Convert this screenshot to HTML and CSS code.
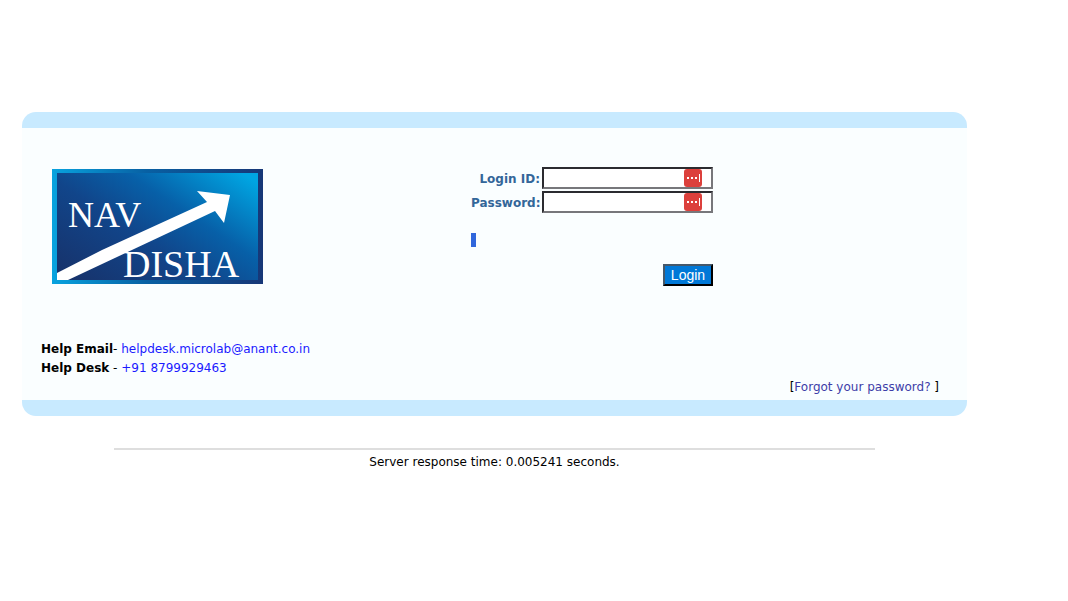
FILE: index.html
```
<!DOCTYPE html>
<html lang="en">
<head>
<meta charset="utf-8">
<meta name="viewport" content="width=device-width, initial-scale=1">
<title>Nav Disha Login</title>
<link rel="stylesheet" href="styles.css">
</head>
<body>
<div class="page">
  <main class="panel">
    <div class="intro">
      <svg class="logo" viewBox="0 0 211 115" role="img" aria-label="Nav Disha">
        <defs>
          <linearGradient id="face" x1="0" y1="0.9" x2="1" y2="0.1">
            <stop offset="0" stop-color="#17336c"/>
            <stop offset="0.4" stop-color="#11458a"/>
            <stop offset="0.65" stop-color="#0760a8"/>
            <stop offset="1" stop-color="#00a5e2"/>
          </linearGradient>
          <linearGradient id="frame" x1="0" y1="0" x2="1" y2="0">
            <stop offset="0" stop-color="#08a3df"/>
            <stop offset="0.45" stop-color="#0860a3"/>
            <stop offset="1" stop-color="#173777"/>
          </linearGradient>
        </defs>
        <rect width="211" height="115" fill="url(#frame)"/>
        <rect x="5" y="4" width="201" height="107" fill="url(#face)"/>
        <path d="M5 104 L50 81 L155 33 L145 22 L178 26 L172 54 L163 42 L65 88 L16 111 H5Z" fill="#fff"/>
        <text class="logo-text" x="16" y="58" font-size="36">NAV</text>
        <text class="logo-text" x="71" y="108" font-size="38">DISHA</text>
      </svg>
      <form class="login">
        <label class="label" for="login-id">Login ID:</label>
        <div class="field">
          <input class="input" id="login-id" type="text">
          <svg class="key" viewBox="0 0 18 18" aria-hidden="true"><rect width="18" height="18" rx="3" fill="#dc403c"/><path d="M3 8h2v2H3zM7 8h2v2H7zM11 8h2v2h-2zM15 5h1v8h-1z" fill="#fff"/></svg>
        </div>
        <label class="label" for="password">Password:</label>
        <div class="field">
          <input class="input" id="password" type="password">
          <svg class="key" viewBox="0 0 18 18" aria-hidden="true"><rect width="18" height="18" rx="3" fill="#dc403c"/><path d="M3 8h2v2H3zM7 8h2v2H7zM11 8h2v2h-2zM15 5h1v8h-1z" fill="#fff"/></svg>
        </div>
        <div class="marker"></div>
        <button class="submit" type="submit">Login</button>
      </form>
    </div>
    <div class="help">
      <div><b>Help Email</b>- <a href="mailto:helpdesk.microlab@anant.co.in">helpdesk.microlab@anant.co.in</a></div>
      <div><b>Help Desk</b> - <a href="tel:+918799929463">+91 8799929463</a></div>
    </div>
    <div class="forgot">[<a class="forgot-link" href="#forgot">Forgot your password?</a> ]</div>
  </main>
  <footer class="footer">Server response time: 0.005241 seconds.</footer>
</div>
</body>
</html>
```
FILE: styles.css
```
* { box-sizing: border-box; }
body {
  margin: 0;
  background: #fff;
  color: #000;
  font: 12px/19px Verdana, "DejaVu Sans", sans-serif;
}
.page { padding: 112px 101px 24px 22px; }
.panel {
  border: solid #c8eaff;
  border-width: 16px 0;
  border-radius: 14px;
  background: #fafeff;
}
.intro {
  display: grid;
  grid-template-columns: 449fr 496fr;
  align-items: start;
  padding-top: 39px;
}
.logo {
  display: block;
  width: 211px;
  height: 115px;
  margin: 2px 0 0 30px;
}
.logo-text { fill: #fff; font-family: "Liberation Serif", serif; }
.login {
  display: grid;
  grid-template-columns: 69px 171px;
  column-gap: 2px;
  row-gap: 2px;
  align-items: center;
}
.label {
  padding-top: 2px;
  color: #336699;
  font-weight: bold;
  text-align: right;
  white-space: nowrap;
}
.field { position: relative; height: 22px; }
.input {
  display: block;
  width: 100%;
  height: 22px;
  padding: 0 32px 0 4px;
  border: 2px solid;
  border-color: #2b2b30 #77777b #77777b #2b2b30;
  border-radius: 0;
  background: #fff;
  font: inherit;
}
.key {
  position: absolute;
  top: 2px;
  right: 11px;
  width: 18px;
  height: 18px;
}
.marker {
  grid-column: 1 / -1;
  width: 5px;
  height: 14px;
  margin: 18px 0 15px;
  background: #3067dc;
}
.submit {
  grid-column: 2;
  justify-self: end;
  width: 50px;
  height: 22px;
  padding: 0;
  border: 2px solid;
  border-color: #45586a #000 #000 #45586a;
  border-radius: 0;
  background: #0078d7;
  color: #fff;
  font: 14px/18px "Liberation Sans", Arial, sans-serif;
}
.help { padding: 54px 19px 0; }
a { color: #1a1aff; text-decoration: none; }
.forgot { padding: 0 28px 3px 0; text-align: right; }
.forgot-link { color: #3d3da8; }
.footer {
  margin: 32px 92px 0;
  padding-top: 3px;
  border-top: 2px solid #dedede;
  text-align: center;
}
```
